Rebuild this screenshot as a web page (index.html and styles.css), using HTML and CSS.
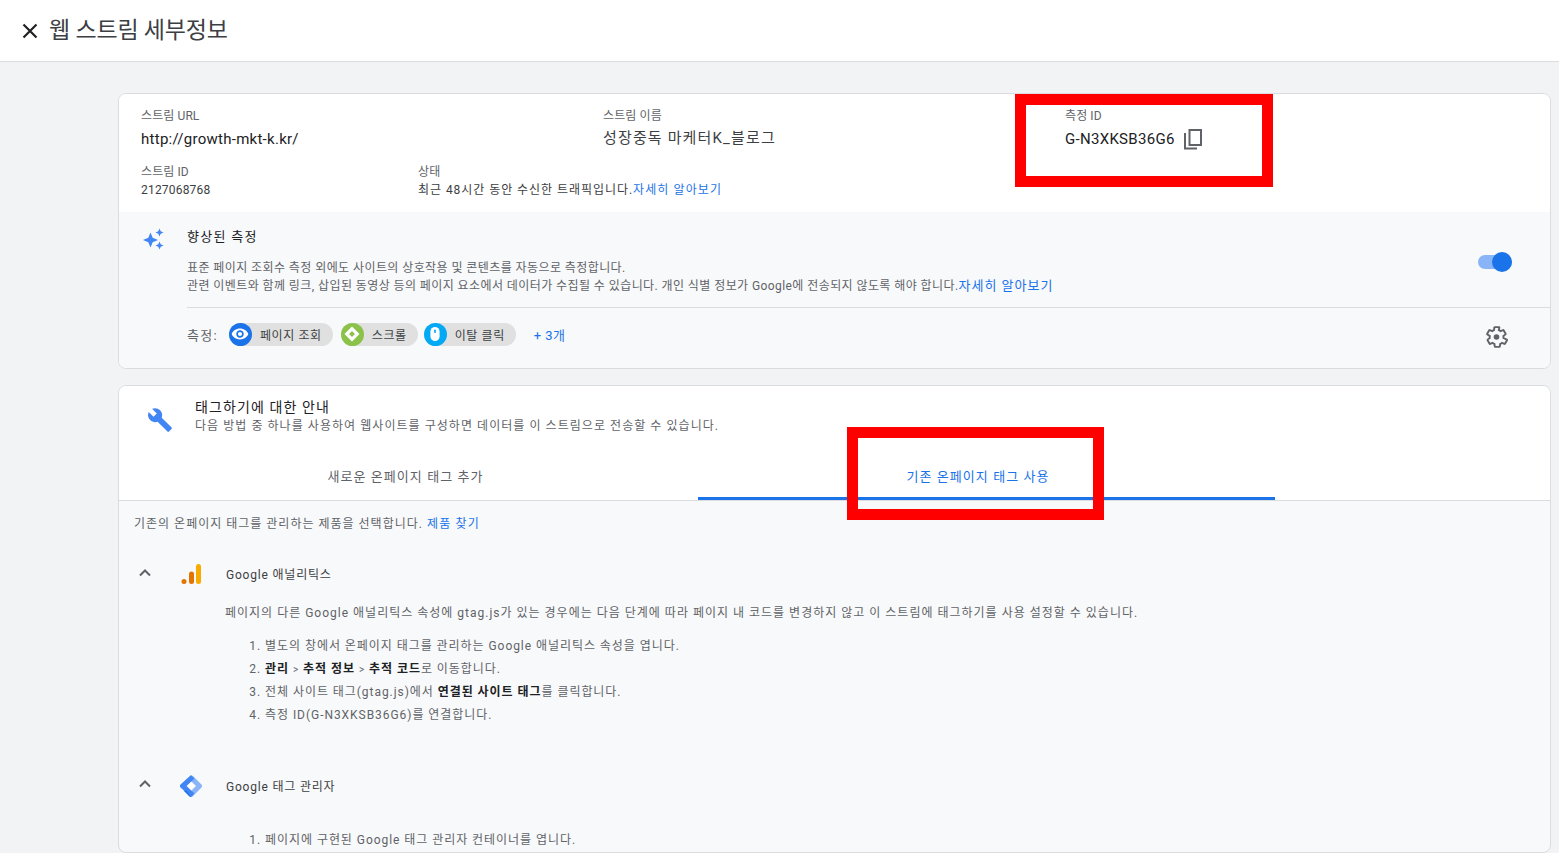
FILE: index.html
```html
<!DOCTYPE html>
<html lang="ko">
<head>
    <meta charset="UTF-8">
    <title>웹 스트림 세부정보</title>
    <link rel="stylesheet" href="styles.css">
</head>
<body>
    <header class="topbar">
        <svg class="close-icon" viewBox="0 0 24 24" width="24" height="24"><path d="M5.500 5.500l13 13M18.500 5.500l-13 13" stroke="#202124" stroke-width="2.200" fill="none"/></svg>
        <h1>웹 스트림 세부정보</h1>
    </header>

    <main class="content">
        <section class="card">
            <div class="stream-info">
                <div class="info-row first">
                    <div class="info-url">
                        <div class="label">스트림 URL</div>
                        <div class="value value-url">http://growth-mkt-k.kr/</div>
                    </div>
                    <div class="info-name">
                        <div class="label">스트림 이름</div>
                        <div class="value value-name">성장중독 마케터K_블로그</div>
                    </div>
                    <div class="info-id">
                        <div class="label">측정 ID</div>
                        <div class="value value-id">G-N3XKSB36G6
                            <svg class="copy-icon" viewBox="0 0 20 22" width="20" height="22"><path d="M6.500 2h11.500v15h-11.500z M2 5v15.500h12" stroke="#5f6368" stroke-width="2" fill="none"/></svg>
                        </div>
                    </div>
                </div>
                <div class="info-row second">
                    <div class="info-stream">
                        <div class="label">스트림 ID</div>
                        <div class="small-value number">2127068768</div>
                    </div>
                    <div>
                        <div class="label">상태</div>
                        <div class="small-value">최근 48시간 동안 수신한 트래픽입니다.<a>자세히 알아보기</a></div>
                    </div>
                </div>
            </div>

            <div class="enhanced">
                <svg class="spark-icon" viewBox="0 0 24 24" width="24" height="24">
                    <path d="M9.500 5.500l2.200 5.300 5.300 2.200-5.300 2.200-2.200 5.300-2.200-5.300-5.300-2.200 5.300-2.200z" fill="#4285f4"/>
                    <path d="M18.500 1.500l1.200 2.800 2.800 1.200-2.800 1.200-1.200 2.800-1.200-2.800-2.800-1.200 2.800-1.200zM18.500 14.500l1.200 2.800 2.800 1.200-2.800 1.200-1.200 2.800-1.200-2.800-2.800-1.200 2.800-1.200z" fill="#4285f4"/>
                </svg>
                <div class="enhanced-body">
                    <div class="enhanced-top">
                        <h2>향상된 측정</h2>
                        <p>표준 페이지 조회수 측정 외에도 사이트의 상호작용 및 콘텐츠를 자동으로 측정합니다.<br>관련 이벤트와 함께 링크, 삽입된 동영상 등의 페이지 요소에서 데이터가 수집될 수 있습니다. 개인 식별 정보가 Google에 전송되지 않도록 해야 합니다.<a>자세히 알아보기</a></p>
                        <div class="toggle"><span class="toggle-knob"></span></div>
                    </div>
                    <div class="measures">
                        <span class="measures-label">측정:</span>
                        <span class="chip chip-view">
                            <span class="chip-icon blue"><svg viewBox="0 0 24 24" width="20" height="20"><path d="M12 5.500c-4.600 0-8.500 2.700-10 6.500 1.500 3.800 5.400 6.500 10 6.500s8.500-2.700 10-6.500c-1.500-3.800-5.400-6.500-10-6.500zm0 11c-2.500 0-4.500-2-4.500-4.500s2-4.500 4.500-4.500 4.500 2 4.500 4.500-2 4.500-4.500 4.500zm0-7a2.500 2.500 0 1 0 0 5 2.500 2.500 0 0 0 0-5z" fill="#fff"/></svg></span>
                            페이지 조회
                        </span>
                        <span class="chip chip-scroll">
                            <span class="chip-icon green"><svg viewBox="0 0 24 24" width="20" height="20"><path d="M12 3l9 9-9 9-9-9z" fill="#fff"/><path d="M12 8.500l3.500 3.500-3.500 3.500-3.500-3.500z" fill="#8bc34a"/></svg></span>
                            스크롤
                        </span>
                        <span class="chip chip-click">
                            <span class="chip-icon cyan"><svg viewBox="0 0 24 24" width="20" height="20"><rect x="6.500" y="3.500" width="11" height="17" rx="5.500" fill="#fff"/><rect x="11" y="6.500" width="2" height="4.500" rx="1" fill="#03a9f4"/></svg></span>
                            이탈 클릭
                        </span>
                        <a class="more">+ 3개</a>
                        <svg class="gear-icon" viewBox="0 0 24 24" width="24" height="24"><path d="M19.400 13c0-.3.100-.6.100-1s0-.7-.1-1l2.100-1.600c.2-.2.200-.4.100-.6l-2-3.500c-.1-.2-.4-.3-.6-.2l-2.500 1c-.5-.4-1.100-.7-1.700-1L15.400 2.500c0-.2-.2-.4-.5-.4h-4c-.2 0-.5.200-.5.400l-.4 2.600c-.6.300-1.200.6-1.700 1l-2.500-1c-.2-.1-.5 0-.6.200l-2 3.500c-.1.200-.1.500.1.600L5.800 11c0 .3-.1.700-.1 1s0 .7.100 1l-2.100 1.600c-.2.200-.2.400-.1.600l2 3.500c.1.200.4.300.6.200l2.500-1c.5.400 1.100.7 1.700 1l.4 2.600c0 .2.200.4.500.4h4c.2 0 .5-.2.500-.4l.4-2.600c.6-.3 1.200-.6 1.700-1l2.500 1c.2.100.5 0 .6-.2l2-3.500c.1-.2.100-.5-.1-.6z" fill="none" stroke="#5f6368" stroke-width="1.900"/><circle cx="12.500" cy="12" r="2.800" fill="#5f6368"/></svg>
                    </div>
                </div>
            </div>
        </section>

        <section class="card tagging">
            <div class="tagging-head">
                <svg class="wrench-icon" viewBox="0 0 24 24" width="26" height="26"><path d="M22.700 19l-9.100-9.100c.9-2.300.4-5-1.500-6.900-2-2-5-2.400-7.400-1.300L9 6 6 9 1.600 4.700C.4 7.100.9 10.100 2.900 12.100c1.900 1.900 4.600 2.400 6.900 1.500l9.100 9.100c.4.400 1 .4 1.400 0l2.300-2.300c.5-.4.500-1.100.1-1.400z" fill="#4285f4"/></svg>
                <div>
                    <h2>태그하기에 대한 안내</h2>
                    <p>다음 방법 중 하나를 사용하여 웹사이트를 구성하면 데이터를 이 스트림으로 전송할 수 있습니다.</p>
                </div>
            </div>
            <div class="tabs">
                <div class="tab">새로운 온페이지 태그 추가</div>
                <div class="tab active">기존 온페이지 태그 사용</div>
            </div>
            <div class="tab-body">
                <p class="find-line">기존의 온페이지 태그를 관리하는 제품을 선택합니다. <a>제품 찾기</a></p>

                <div class="product product-ga">
                    <svg class="chevron" viewBox="0 0 14 10" width="14" height="10"><path d="M2 7.500l5-5 5 5" stroke="#5f6368" stroke-width="2" fill="none"/></svg>
                    <svg class="product-icon" viewBox="0 0 24 24" width="24" height="24"><rect x="17" y="2" width="5" height="20" rx="2.500" fill="#f9ab00"/><rect x="10" y="9.500" width="5" height="12.500" rx="2.500" fill="#e37400"/><circle cx="5" cy="19.500" r="2.500" fill="#e37400"/></svg>
                    <span class="product-name">Google 애널리틱스</span>
                </div>
                <p class="product-desc">페이지의 다른 Google 애널리틱스 속성에 gtag.js가 있는 경우에는 다음 단계에 따라 페이지 내 코드를 변경하지 않고 이 스트림에 태그하기를 사용 설정할 수 있습니다.</p>
                <ol class="steps">
                    <li>별도의 창에서 온페이지 태그를 관리하는 Google 애널리틱스 속성을 엽니다.</li>
                    <li><b>관리</b> <small>&gt;</small> <b>추적 정보</b> <small>&gt;</small> <b>추적 코드</b>로 이동합니다.</li>
                    <li>전체 사이트 태그(gtag.js)에서 <b>연결된 사이트 태그</b>를 클릭합니다.</li>
                    <li>측정 ID(G-N3XKSB36G6)를 연결합니다.</li>
                </ol>

                <div class="product product-gtm">
                    <svg class="chevron" viewBox="0 0 14 10" width="14" height="10"><path d="M2 7.500l5-5 5 5" stroke="#5f6368" stroke-width="2" fill="none"/></svg>
                    <svg class="product-icon" viewBox="0 0 24 24" width="24" height="24"><path d="M13.500 1.500l9 9c.8.800.8 2.200 0 3l-9 9c-.8.800-2.200.8-3 0l-2-2 8.500-8.500-5.500-5.500z" fill="#8ab4f8"/><path d="M12 1l3.500 3.500-8 7.500 8 7.500L12 23 1.500 13.500c-.8-.8-.8-2.200 0-3z" fill="#4285f4"/><path d="M12 8.500l3.500 3.500-3.500 3.500L8.500 12z" fill="#fff"/><path d="M7.500 16.500L12 23l-1.500-.5L5 17z" fill="#1a73e8"/></svg>
                    <span class="product-name">Google 태그 관리자</span>
                </div>
                <ol class="steps steps-gtm">
                    <li>페이지에 구현된 Google 태그 관리자 컨테이너를 엽니다.</li>
                </ol>
            </div>
        </section>
    </main>

    <div class="highlight highlight-id"></div>
    <div class="highlight highlight-tab"></div>
</body>
</html>
```

FILE: styles.css
```css
html, body {
    height: 853px;
    overflow: hidden;
}
body {
    margin: 0;
    background: #f1f3f4;
    color: #3c4043;
    font-family: Roboto, 'Noto Sans CJK KR', sans-serif;
    position: relative;
}
a {
    color: #1a73e8;
}
h1, h2, p, ol {
    margin: 0;
    padding: 0;
    font-weight: 400;
}

.topbar {
    height: 61px;
    background: white;
    border-bottom: 1px solid #dadce0;
    display: flex;
    align-items: center;
    padding-left: 18px;
}
.topbar h1 {
    font-size: 23px;
    margin-left: 7px;
    margin-top: -5px;
    letter-spacing: -0.2px;
    color: #3c4043;
}

.content {
    padding: 31px 8px 0 118px;
}
.card {
    background: white;
    border: 1px solid #dadce0;
    border-radius: 8px;
    overflow: hidden;
}
.tagging {
    margin-top: 16px;
    background: #f8f9fa;
}

.stream-info {
    height: 118px;
    box-sizing: border-box;
    padding: 14px 22px 0;
    background: white;
}
.info-row {
    display: flex;
}
.info-row.first {
    height: 56px;
}
.info-url, .info-name {
    width: 462px;
}
.info-stream {
    width: 277px;
}
.label {
    font-size: 12px;
    line-height: 16px;
    letter-spacing: 0.1px;
    color: #5f6368;
}
.value {
    font-size: 15px;
    line-height: 22px;
    margin-top: 4px;
    color: #202124;
}
.value-url {
    letter-spacing: 0.27px;
}
.value-name {
    letter-spacing: 1.15px;
    margin-top: 3px;
    padding-bottom: 1px;
    color: #3c4043;
}
.value-id {
    display: flex;
    align-items: center;
    gap: 8px;
    font-size: 15px;
    letter-spacing: 0.3px;
}
.small-value {
    font-size: 12px;
    line-height: 18px;
    letter-spacing: 0.95px;
    margin-top: 1px;
    color: #3c4043;
}
.small-value a {
    letter-spacing: 1.1px;
}
.small-value.number {
    letter-spacing: 0.2px;
}

.enhanced {
    background: #f8f9fa;
    display: flex;
    height: 156px;
    padding-left: 22px;
}
.spark-icon {
    margin-top: 15px;
    flex: none;
}
.enhanced-body {
    margin-left: 22px;
    flex: 1;
}
.enhanced-top {
    height: 96px;
    border-bottom: 1px solid #dadce0;
    padding-top: 15px;
    box-sizing: border-box;
    position: relative;
}
.enhanced-top h2 {
    font-size: 13px;
    line-height: 20px;
    letter-spacing: 1.3px;
    color: #202124;
}
.enhanced-top p {
    font-size: 12px;
    line-height: 18px;
    margin-top: 12px;
    letter-spacing: 0.42px;
    color: #5f6368;
}
.enhanced-top a {
    font-size: 13px;
    letter-spacing: 1px;
}
.toggle {
    position: absolute;
    right: 38px;
    top: 43px;
    width: 34px;
    height: 14px;
    border-radius: 7px;
    background: #8ab4f8;
}
.toggle-knob {
    position: absolute;
    right: 0;
    top: -3px;
    width: 20px;
    height: 20px;
    border-radius: 50%;
    background: #1a73e8;
}
.measures {
    display: flex;
    align-items: center;
    height: 52px;
    font-size: 12px;
    position: relative;
}
.measures-label {
    font-size: 13px;
    letter-spacing: 1.3px;
    color: #5f6368;
    margin-right: 11px;
}
.chip {
    display: flex;
    align-items: center;
    height: 23px;
    border-radius: 12px;
    background: #e0e0e0;
    color: #3c4043;
    padding-right: 11px;
    margin-right: 8px;
    letter-spacing: 0.6px;
}
.chip-scroll {
    margin-right: 6px;
}
.chip-icon {
    width: 23px;
    height: 23px;
    border-radius: 50%;
    display: flex;
    align-items: center;
    justify-content: center;
    margin-right: 8px;
}
.blue { background: #1a73e8; }
.green { background: #8bc34a; }
.cyan { background: #03a9f4; }
.more {
    margin-left: 10px;
    font-size: 13px;
    letter-spacing: 0.4px;
}
.gear-icon {
    position: absolute;
    right: 42px;
    top: 17px;
}

.tagging-head {
    background: white;
    display: flex;
    height: 72px;
    padding: 12px 0 0 28px;
    box-sizing: border-box;
}
.wrench-icon {
    margin: 9px 22px 0 0;
    flex: none;
}
.tagging-head h2 {
    font-size: 14px;
    line-height: 18px;
    letter-spacing: 1.1px;
    color: #202124;
}
.tagging-head p {
    font-size: 12px;
    line-height: 16px;
    margin-top: 2px;
    letter-spacing: 1.05px;
    color: #5f6368;
}

.tabs {
    background: white;
    display: flex;
    height: 42px;
    border-bottom: 1px solid #dadce0;
}
.tab {
    width: 579px;
    padding-right: 6px;
    box-sizing: border-box;
    height: 40px;
    line-height: 38px;
    text-align: center;
    font-size: 13px;
    letter-spacing: 1.07px;
    color: #5f6368;
}
.tab.active {
    width: 577px;
    padding-right: 17px;
    height: 42px;
    color: #1a73e8;
    border-bottom: 3px solid #1a73e8;
}

.tab-body {
    padding: 13px 16px 0 15px;
}
.find-line {
    font-size: 12px;
    line-height: 20px;
    letter-spacing: 1px;
    color: #5f6368;
}
.find-line a {
    letter-spacing: 1.2px;
}
.product {
    display: flex;
    align-items: center;
    height: 24px;
}
.product-ga {
    margin-top: 28px;
}
.product-gtm {
    margin-top: 47px;
}
.chevron {
    margin-left: 4px;
    margin-top: -4px;
    flex: none;
}
.product-ga .chevron {
    margin-top: -2px;
}
.product-icon {
    margin-left: 27px;
    flex: none;
}
.product-name {
    margin-left: 23px;
    margin-top: -2px;
    font-size: 12px;
    letter-spacing: 0.8px;
    color: #3c4043;
}
.product-desc {
    margin: 17px 0 0 91px;
    font-size: 12px;
    line-height: 20px;
    letter-spacing: 1px;
    color: #5f6368;
}
.steps {
    margin: 12px 0 0 131px;
    font-size: 12px;
    line-height: 23px;
    letter-spacing: 0.95px;
    color: #5f6368;
}
.steps b {
    color: #202124;
}
.steps small {
    font-size: 10px;
}
.steps-gtm {
    margin-top: 31px;
}

.highlight {
    position: absolute;
    border: 11px solid #ff0000;
    box-sizing: border-box;
}
.highlight-id {
    left: 1015px;
    top: 94px;
    width: 258px;
    height: 93px;
}
.highlight-tab {
    left: 847px;
    top: 427px;
    width: 257px;
    height: 93px;
}
```
